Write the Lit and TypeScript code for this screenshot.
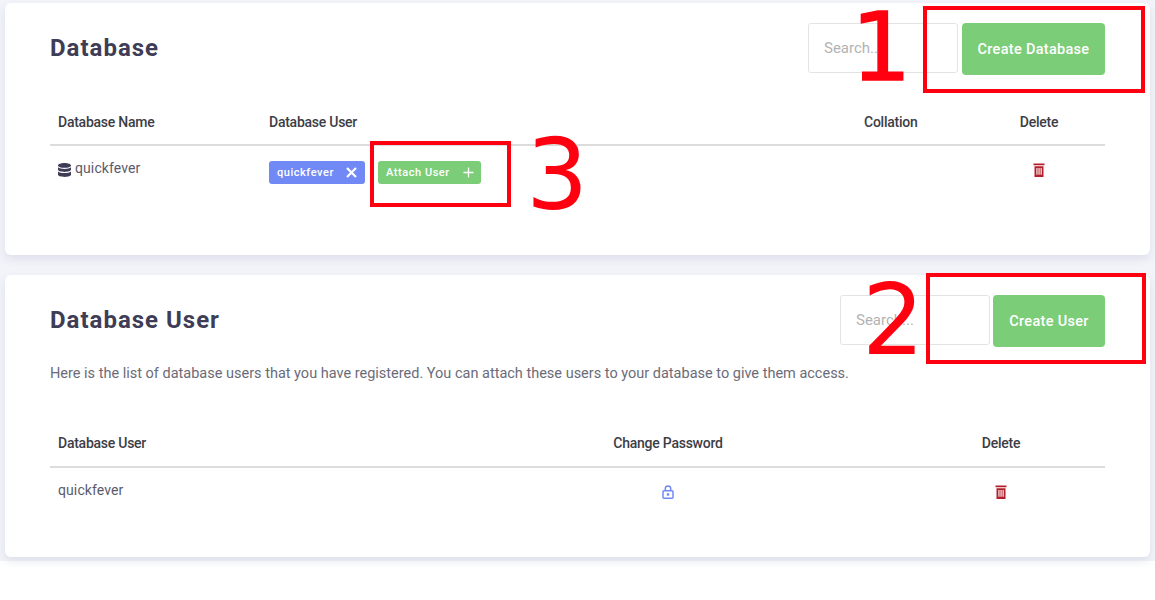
import { LitElement, html, css, svg } from "lit";
import { customElement } from "lit/decorators.js";

const trash = html`<svg class="trash" viewBox="0 0 12 14" width="12" height="14" aria-hidden="true">
  <path fill="#b3202c" d="M.5 .6h11v1.700H.5zM1.500 3.200h9V14h-9zM3.400 5v6.800h1.100V5zm2.100 0v6.800h1.100V5zm2.100 0v6.800h1.100V5z" fill-rule="evenodd"/>
</svg>`;

const dbIcon = html`<svg class="db" viewBox="0 0 13 14" width="13" height="14" aria-hidden="true">
  <path fill="#3f3d56" d="M6.500 0C10 0 13 1 13 2.400S10 4.800 6.500 4.800 0 3.800 0 2.400 3 0 6.500 0zM0 4.300c1.300 1.100 3.800 1.600 6.500 1.600S11.700 5.400 13 4.300V6.600C13 8 10 9 6.500 9S0 8 0 6.600zM0 8.500c1.300 1.100 3.800 1.600 6.500 1.600s5.200-.5 6.500-1.600v3.100C13 13 10 14 6.500 14S0 13 0 11.600z"/>
</svg>`;

const lock = html`<svg viewBox="0 0 12 14" width="12" height="14" aria-hidden="true">
  <path fill="none" stroke="#7189f5" stroke-width="1.500" d="M3.300 6V3.600a2.700 2.700 0 0 1 5.400 0V6"/>
  <rect x="1" y="5.800" width="10" height="7.400" rx="1" fill="none" stroke="#7189f5" stroke-width="1.500"/>
  <rect x="4.800" y="8.300" width="2.400" height="2.400" fill="#7189f5"/>
</svg>`;

const cross = svg`<path d="M1 1l9 9M10 1l-9 9" stroke="#fff" stroke-width="2.200" fill="none"/>`;
const plus = svg`<path d="M5.500 .5v10M.5 5.500h10" stroke="#fff" stroke-width="1.300" fill="none"/>`;

@customElement("app-root")
export class AppRoot extends LitElement {
  static styles = css`
    :host {
      display: block;
      position: relative;
      height: 600px;
      background: #fff;
      font-family: Roboto, "Liberation Sans", sans-serif;
      overflow: hidden;
    }
    .page {
      background: #f3f4f9;
      padding: 3px 5px 4px;
      display: flex;
      flex-direction: column;
      gap: 20px;
    }
    .card {
      background: #fff;
      border-radius: 6px;
      box-shadow: 0 4px 8px rgba(180, 186, 210, 0.35);
      padding: 20px 45px 0;
      box-sizing: border-box;
    }
    .first { height: 252px; }
    .second { height: 282px; }
    .head {
      display: flex;
      align-items: flex-start;
      height: 52px;
    }
    h2 {
      margin: 0;
      flex: 1;
      font-size: 24px;
      line-height: 50px;
      font-weight: 700;
      color: #3f3d56;
      letter-spacing: 1px;
    }
    .search {
      box-sizing: border-box;
      width: 150px;
      height: 50px;
      border: 1px solid #e3e3e3;
      border-radius: 3px;
      padding-left: 15px;
      margin-right: 4px;
      display: flex;
      align-items: center;
      font-size: 15px;
      color: #b3b3b3;
    }
    .second .search { margin-right: 3px; }
    .btn {
      background: #7bcd78;
      color: #fff;
      height: 52px;
      border-radius: 4px;
      display: flex;
      align-items: center;
      justify-content: center;
      font-size: 14.5px;
      font-weight: 500;
      letter-spacing: 0.3px;
    }
    .create-db { width: 143px; }
    .create-user { width: 112px; }
    .desc {
      margin: 17px 0 0;
      font-size: 14.5px;
      line-height: 20px;
      color: #6b6b78;
    }
    .row {
      display: grid;
      font-size: 14px;
    }
    .db-grid { grid-template-columns: 211px 595px 117px 132px; }
    .user-grid { grid-template-columns: 389px 458px 208px; }
    .row > div { padding: 0 8px; }
    .thead {
      color: #3d3d46;
      font-weight: 500;
      letter-spacing: -0.25px;
      border-bottom: 2px solid #dcdcdc;
    }
    .first .thead { margin-top: 24px; height: 45px; line-height: 46px; }
    .second .thead { margin-top: 36px; height: 46px; line-height: 47px; }
    .tbody {
      color: #5b5a6b;
      padding-top: 12px;
      line-height: 20px;
    }
    .center { text-align: center; }
    .name {
      display: flex;
      align-items: flex-start;
      gap: 4px;
      letter-spacing: 0.1px;
    }
    .icon-cell {
      display: flex;
      justify-content: center;
      padding-top: 5px !important;
    }
    .tags {
      display: flex;
      gap: 13px;
      padding-top: 3px !important;
    }
    .tag {
      box-sizing: border-box;
      height: 23px;
      border-radius: 3px;
      display: flex;
      align-items: center;
      justify-content: space-between;
      padding: 0 8px;
      color: #fff;
      font-size: 11px;
      font-weight: 500;
      letter-spacing: 0.55px;
    }
    .tag svg { display: block; }
    .blue { background: #7189f5; width: 96px; }
    .green { background: #7bcd78; width: 103px; padding-right: 7px; }
    .db { display: block; margin-top: 5px; }
    .trash { display: block; }
    .mark {
      position: absolute;
      box-sizing: border-box;
      border: 4px solid #ff0010;
    }
    .m1 { left: 923px; top: 6px; width: 222px; height: 87px; }
    .m2 { left: 926px; top: 273px; width: 220px; height: 91px; }
    .m3 { left: 370px; top: 141px; width: 141px; height: 66px; }
    .num {
      position: absolute;
      color: #ff0010;
      font-family: "DejaVu Sans", sans-serif;
      font-size: 98px;
      line-height: 100px;
    }
    .n1 { left: 851px; top: -3px; font-size: 95px; -webkit-text-stroke: 1.5px #ff0010; }
    .n2 { left: 862px; top: 270px; }
    .n3 { left: 526px; top: 125px; }
  `;

  render() {
    return html`
      <div class="page">
        <section class="card first">
          <div class="head">
            <h2>Database</h2>
            <div class="search">Search...</div>
            <div class="btn create-db">Create Database</div>
          </div>
          <div class="row db-grid thead">
            <div>Database Name</div>
            <div>Database User</div>
            <div>Collation</div>
            <div class="center">Delete</div>
          </div>
          <div class="row db-grid tbody">
            <div class="name">${dbIcon}<span>quickfever</span></div>
            <div class="tags">
              <span class="tag blue">quickfever <svg viewBox="0 0 11 11" width="11" height="11">${cross}</svg></span>
              <span class="tag green">Attach User <svg viewBox="0 0 11 11" width="11" height="11">${plus}</svg></span>
            </div>
            <div></div>
            <div class="icon-cell">${trash}</div>
          </div>
        </section>
        <section class="card second">
          <div class="head">
            <h2>Database User</h2>
            <div class="search">Search...</div>
            <div class="btn create-user">Create User</div>
          </div>
          <p class="desc">Here is the list of database users that you have registered. You can attach these users to your database to give them access.</p>
          <div class="row user-grid thead">
            <div>Database User</div>
            <div class="center">Change Password</div>
            <div class="center">Delete</div>
          </div>
          <div class="row user-grid tbody">
            <div class="name">quickfever</div>
            <div class="icon-cell">${lock}</div>
            <div class="icon-cell">${trash}</div>
          </div>
        </section>
      </div>
      <div class="mark m1"></div>
      <div class="mark m2"></div>
      <div class="mark m3"></div>
      <div class="num n1">1</div>
      <div class="num n2">2</div>
      <div class="num n3">3</div>
    `;
  }
}
